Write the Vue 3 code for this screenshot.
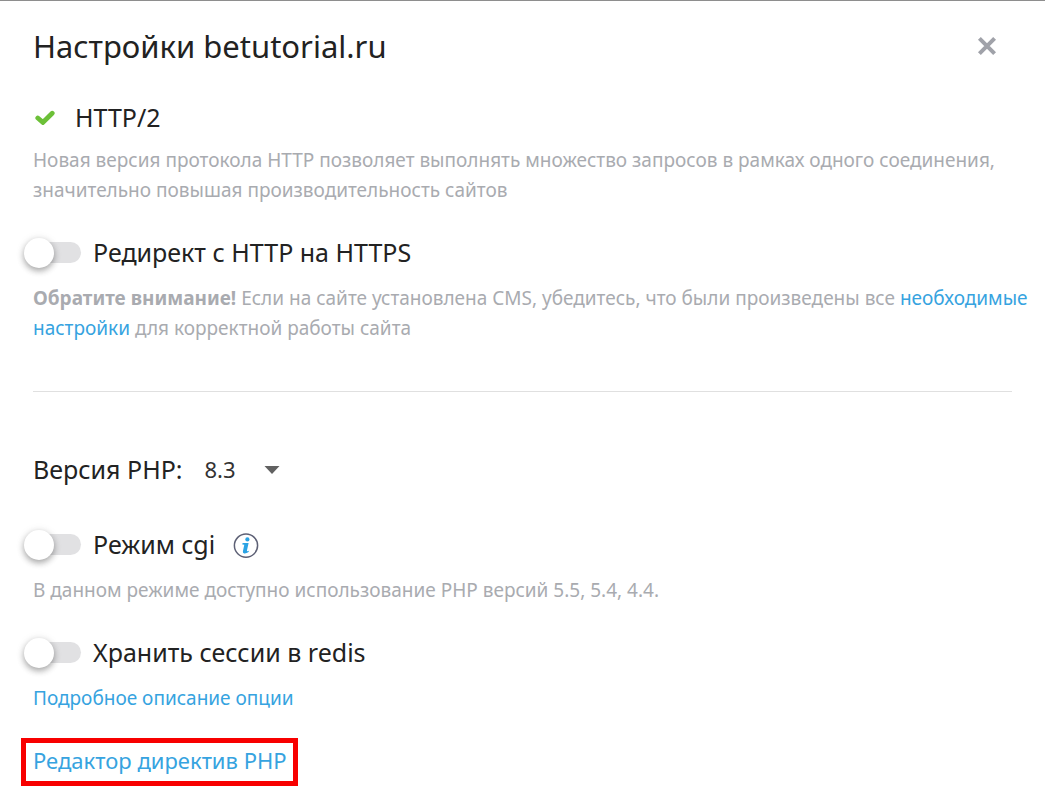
<template>
  <div class="page">
    <div class="backdrop"></div>

    <main class="dialog">
      <header class="dialog-header">
        <h1 class="title">Настройки betutorial.ru</h1>
        <button type="button" class="close" aria-label="Закрыть">
          <svg viewBox="0 0 20 20" width="20" height="20" aria-hidden="true">
            <path d="M2.4 2.4 L17.6 17.6 M17.6 2.4 L2.4 17.6" stroke="#a0a2a9" stroke-width="4" />
          </svg>
        </button>
      </header>

      <section class="group">
        <h2 class="row feature">
          <svg class="check" viewBox="0 0 20 16" width="20" height="16" aria-hidden="true">
            <path d="M2.8 9 L7.9 13.4 L17.2 4.2" fill="none" stroke="#6cc038" stroke-width="4.8" stroke-linecap="round" stroke-linejoin="miter" />
          </svg>
          <span>HTTP/2</span>
        </h2>
        <p class="note">
          Новая версия протокола HTTP позволяет выполнять множество запросов в рамках одного соединения, значительно повышая производительность сайтов
        </p>
      </section>

      <section class="group">
        <div class="row toggle-row">
          <input id="https" v-model="https" type="checkbox" class="toggle">
          <label for="https">Редирект с HTTP на HTTPS</label>
        </div>
        <p class="note">
          <strong>Обратите внимание!</strong> Если на сайте установлена CMS, убедитесь, что были произведены все <a href="#">необходимые настройки</a> для корректной работы сайта
        </p>
      </section>

      <hr class="divider">

      <div class="row version">
        <label for="php">Версия PHP:</label>
        <span class="select-wrap">
          <select id="php" v-model="php" class="select">
            <option v-for="version in versions" :key="version">{{ version }}</option>
          </select>
          <svg class="caret" viewBox="0 0 16 8" width="16" height="8" aria-hidden="true">
            <path d="M0.5 0 H15.5 L8 8 Z" fill="#616161" />
          </svg>
        </span>
      </div>

      <section class="group">
        <div class="row toggle-row">
          <input id="cgi" v-model="cgi" type="checkbox" class="toggle">
          <label for="cgi">Режим cgi</label>
          <button type="button" class="info" aria-label="Справка">
            <svg viewBox="0 0 26 26" width="26" height="26" aria-hidden="true">
              <circle cx="13" cy="13.6" r="11.6" fill="#fff" stroke="#5d6075" stroke-width="1.5" />
              <circle cx="14.4" cy="7.4" r="2.1" fill="#2ba3e4" />
              <path d="M9.6 11 H15.6 L13.9 18.8 Q13.9 19.6 15.9 18.8 L15.6 20.1 Q13.3 21.8 11.2 21.5 Q9.5 21 9.9 19.2 L11.3 12.8 L9.3 12.4 Z" fill="#2ba3e4" />
            </svg>
          </button>
        </div>
        <p class="note">В данном режиме доступно использование PHP версий 5.5, 5.4, 4.4.</p>
      </section>

      <section class="group">
        <div class="row toggle-row">
          <input id="redis" v-model="redis" type="checkbox" class="toggle">
          <label for="redis">Хранить сессии в redis</label>
        </div>
        <p class="note"><a href="#">Подробное описание опции</a></p>
      </section>

      <a href="#" class="directives">Редактор директив PHP</a>
    </main>
  </div>
</template>

<script setup>
import { ref } from 'vue'

const versions = ['8.3', '8.2', '8.1', '7.4']

const https = ref(false)
const php = ref('8.3')
const cgi = ref(false)
const redis = ref(false)
</script>

<style>
body {
  margin: 0;
  background: #fff;
}
</style>

<style scoped>
.page {
  font-family: "Noto Sans", "Open Sans", sans-serif;
  color: #222;
}

.backdrop {
  height: 1px;
  background: #8e8e8e;
}

.dialog {
  padding: 27px 16px 11px 33px;
}

.dialog-header {
  display: flex;
  align-items: center;
  justify-content: space-between;
  margin-bottom: 38px;
}

.title {
  margin: 0;
  font-size: 31px;
  font-weight: 400;
  line-height: 36px;
}

.close,
.info {
  display: flex;
  padding: 0;
  border: none;
  background: none;
  cursor: pointer;
}

.close {
  margin-right: 32px;
}

.group {
  margin-bottom: 33px;
}

.row {
  display: flex;
  align-items: center;
  margin: 0;
  font-size: 25px;
  font-weight: 400;
  line-height: 30px;
}

.feature {
  gap: 20px;
  padding-left: 2px;
}

.note {
  margin: 13px 0 0;
  color: #a9abb0;
  font-size: 19px;
  line-height: 30px;
}

.toggle-row {
  gap: 12px;
  margin-left: -9px;
}

.toggle-row label {
  margin-top: -2px;
}

.toggle-row + .note {
  margin-top: 15px;
}

.toggle {
  appearance: none;
  position: relative;
  width: 57px;
  height: 30px;
  margin: 0;
  cursor: pointer;
}

.toggle::before {
  content: "";
  position: absolute;
  inset: 4px 0 5px 9px;
  border-radius: 11px;
  background: #e1e1e3;
}

.toggle::after {
  content: "";
  position: absolute;
  top: 0;
  left: 0;
  width: 30px;
  height: 30px;
  border-radius: 50%;
  background: #fff;
  box-shadow: 0 3px 6px rgba(0, 0, 0, 0.3), 0 1px 10px rgba(0, 0, 0, 0.1);
  transition: left 0.2s;
}

.toggle:checked::before {
  background: #9bd4f5;
}

.toggle:checked::after {
  left: 27px;
}

.info {
  margin-left: 6px;
}

a {
  color: #36a3e0;
  text-decoration: none;
}

.divider {
  height: 1px;
  margin: 48px 17px 62px 0;
  border: none;
  background: #e0e0e0;
}

.version {
  gap: 22px;
  margin-bottom: 46px;
}

.select-wrap {
  position: relative;
}

.select {
  display: block;
  appearance: none;
  width: 76px;
  padding: 0;
  border: none;
  background: none;
  color: #333;
  font-family: inherit;
  font-size: 22px;
  line-height: 30px;
}

.caret {
  position: absolute;
  top: 12px;
  right: 0;
  pointer-events: none;
}

.directives {
  display: inline-block;
  margin: -8px 0 0 -12px;
  padding: 2px 6px 6px 7px;
  border: 5px solid #f80000;
  font-size: 22px;
  line-height: 30px;
}
</style>
